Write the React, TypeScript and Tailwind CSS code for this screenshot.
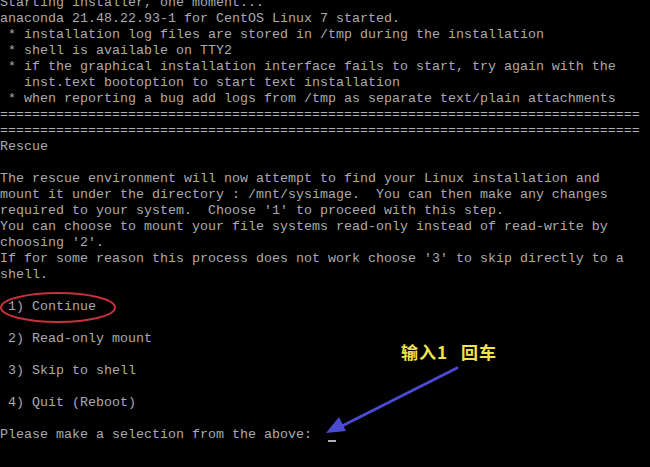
const eq = '='.repeat(80);

const lines = [
  'Starting installer, one moment...',
  'anaconda 21.48.22.93-1 for CentOS Linux 7 started.',
  ' * installation log files are stored in /tmp during the installation',
  ' * shell is available on TTY2',
  ' * if the graphical installation interface fails to start, try again with the',
  '   inst.text bootoption to start text installation',
  ' * when reporting a bug add logs from /tmp as separate text/plain attachments',
  eq,
  eq,
  'Rescue',
  '',
  'The rescue environment will now attempt to find your Linux installation and',
  'mount it under the directory : /mnt/sysimage.  You can then make any changes',
  "required to your system.  Choose '1' to proceed with this step.",
  'You can choose to mount your file systems read-only instead of read-write by',
  "choosing '2'.",
  "If for some reason this process does not work choose '3' to skip directly to a",
  'shell.',
  '',
  ' 1) Continue',
  '',
  ' 2) Read-only mount',
  '',
  ' 3) Skip to shell',
  '',
  ' 4) Quit (Reboot)',
  '',
];

export default function App() {
  return (
    <div className="relative w-[650px] h-[467px] overflow-hidden bg-black">
      <div className="-mt-[5px] font-['Liberation_Mono',monospace] text-[13.333px] leading-[16px] text-[#ababab] whitespace-pre">
        {lines.map((l, i) => (
          <div key={i} className="h-4">{l}</div>
        ))}
        <div className="h-4">
          {'Please make a selection from the above:  '}
          <span className="inline-block w-2 h-[15px] align-top border-b-2 border-[#b0b0b0]" />
        </div>
      </div>

      {/* red ring round option 1 */}
      <svg className="absolute left-0 top-[291px]" width="120" height="34" viewBox="0 0 120 34">
        <ellipse cx="58" cy="16.5" rx="57" ry="14.5" fill="none" stroke="#c8303c" strokeWidth="2" />
      </svg>

      {/* note */}
      <div className="absolute left-[401px] top-[342px] flex gap-[13px] font-['Noto_Sans_CJK_SC',sans-serif] font-bold text-[17px] leading-[20px] tracking-[1px] text-[#f0e44c] whitespace-pre">
        <span>输入1</span>
        <span>回车</span>
      </div>

      {/* arrow to the prompt */}
      <svg className="absolute left-[320px] top-[360px]" width="145" height="80" viewBox="0 0 145 80">
        <line x1="137" y1="8" x2="20" y2="67" stroke="#4a4ad2" strokeWidth="3" strokeLinecap="round" />
        <polygon points="6,73 19,57 26,71" fill="#4a4ad2" />
      </svg>
    </div>
  );
}
